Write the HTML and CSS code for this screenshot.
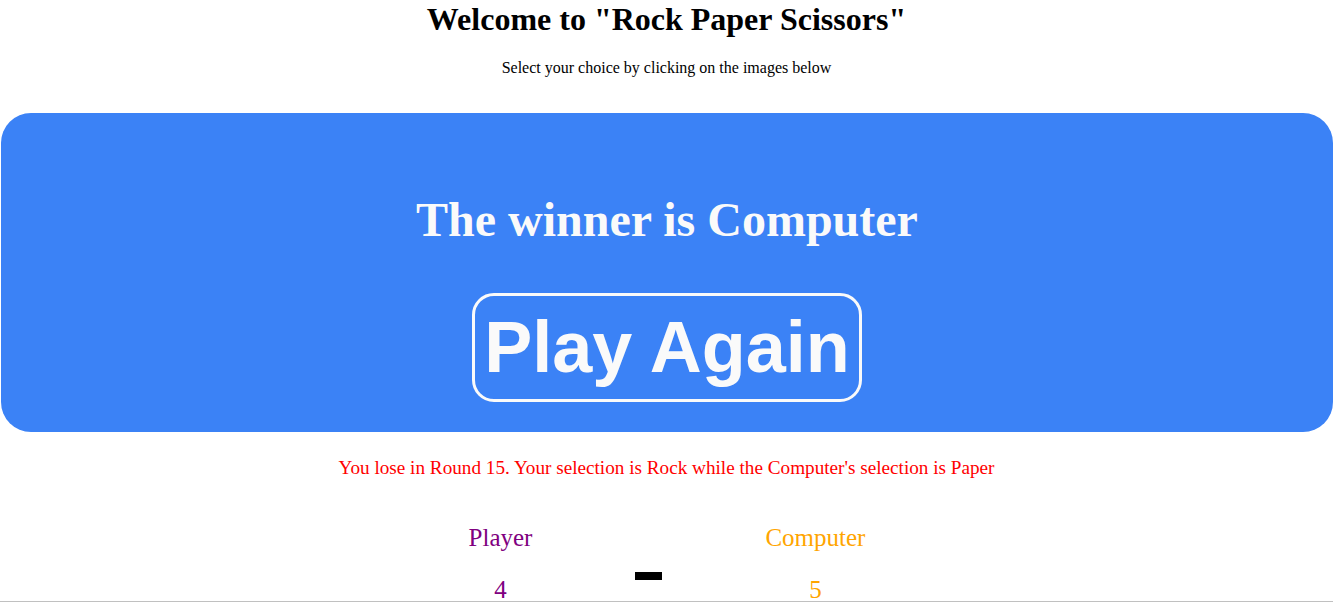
FILE: index.html
```html
<!DOCTYPE html>
<html lang="en">
<head>
<meta charset="utf-8">
<title>Rock Paper Scissors</title>
<link rel="stylesheet" href="styles.css">
</head>
<body>
  <header class="intro">
    <h1 class="title">Welcome to "Rock Paper Scissors"</h1>
    <p class="subtitle">Select your choice by clicking on the images below</p>
  </header>
  <section class="result-panel">
    <h2 class="winner">The winner is Computer</h2>
    <button class="play-again" type="button">Play Again</button>
  </section>
  <p class="round-message">You lose in Round 15. Your selection is Rock while the Computer's selection is Paper</p>
  <div class="scoreboard">
    <div class="score score-player">
      <div class="score-label">Player</div>
      <div class="score-value">4</div>
    </div>
    <div class="score-sep" aria-hidden="true"></div>
    <div class="score score-computer">
      <div class="score-label">Computer</div>
      <div class="score-value">5</div>
    </div>
  </div>
  <div class="page-edge"></div>
</body>
</html>
```
FILE: styles.css
```css
* { box-sizing: border-box; }
html, body { height: 100%; }
body {
  margin: 0;
  font-family: "Liberation Serif", "Times New Roman", serif;
  color: #000;
  background: #fff;
  overflow: hidden;
  position: relative;
}
.intro { text-align: center; padding-top: 1px; }
.title {
  margin: 0 0 21px;
  font-size: 32px;
  font-weight: bold;
}
.subtitle {
  margin: 0;
  font-size: 16px;
}
.result-panel {
  margin: 36px 0 0 1px;
  background: #3b82f6;
  border-radius: 30px;
  height: 319px;
  display: flex;
  flex-direction: column;
  align-items: center;
  padding-top: 79px;
}
.winner {
  margin: 0;
  color: #fafafa;
  font-size: 48px;
  font-weight: bold;
  line-height: 1.15;
}
.play-again {
  margin-top: 46px;
  font-family: "Liberation Sans", Arial, sans-serif;
  font-weight: bold;
  font-size: 72px;
  color: #fafafa;
  background: transparent;
  border: 3px solid #fafafa;
  border-radius: 22px;
  padding: 10px 9px 11px;
  line-height: normal;
}
.round-message {
  margin: 25px 0 0;
  text-align: center;
  color: #ff0000;
  font-size: 19.2px;
}
.scoreboard {
  margin-top: 45px;
  display: flex;
  justify-content: center;
  gap: 103px;
  padding-left: 1px;
}
.score {
  display: flex;
  flex-direction: column;
  align-items: center;
  gap: 24px;
  font-size: 25px;
}
.score-player { color: #800080; }
.score-computer { color: #ffa500; }
.score-sep {
  width: 27px;
  height: 8px;
  background: #000;
  margin-top: 48px;
}
.page-edge {
  position: absolute;
  left: 0;
  right: 0;
  top: 601px;
  border-top: 1px solid #c0c0c0;
}
```
